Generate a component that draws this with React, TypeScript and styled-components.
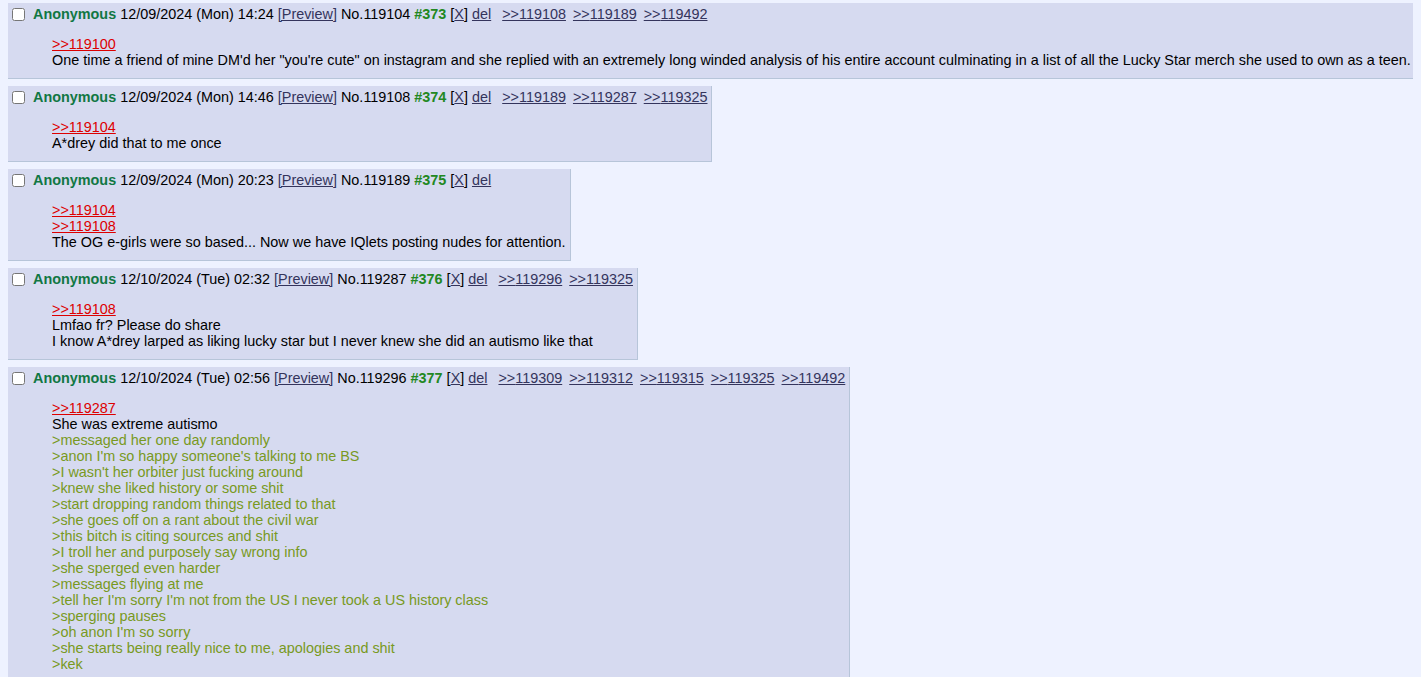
import React from "react";
import styled, { createGlobalStyle } from "styled-components";

const GlobalStyle = createGlobalStyle`
    html, body {
        background: #eef2ff;
    }
    body {
        margin: 3px 8px 0 8px;
        font-family: "Liberation Sans", Arial, sans-serif;
        font-size: 14.4px;
        color: #000;
    }
    ::-webkit-scrollbar {
        display: none;
    }
`;

const Thread = styled.div`
    display: flex;
    flex-direction: column;
    align-items: flex-start;
    gap: 7px;
`;

const Reply = styled.div`
    display: table;
    padding: 3px 4px 2px 2px;
    background: #d6daf0;
    border-right: 1px solid #b7c5d9;
    border-bottom: 1px solid #b7c5d9;
`;

const PostInfo = styled.div`
    display: flex;
    align-items: center;
    height: 16px;
    line-height: 16px;
    white-space: nowrap;
`;

const Check = styled.input`
    width: 13px;
    height: 13px;
    margin: 0 8px 0 2px;
`;

const Name = styled.span`
    color: #117743;
    font-weight: bold;
`;

const PostNum = styled.span`
    color: #228822;
    font-weight: bold;
`;

const InfoLink = styled.a`
    color: #34345c;
    text-decoration: underline;
    cursor: pointer;
`;

const BackLink = styled(InfoLink)`
    margin-left: 7px;
`;

const Body = styled.blockquote`
    margin: 14px 0 8px 42px;
    line-height: 16px;
    white-space: nowrap;
`;

const Line = styled.div<{ $kind?: "quote" | "green" }>`
    color: ${(p) => (p.$kind === "quote" ? "#dd0000" : p.$kind === "green" ? "#789922" : "#000")};
    text-decoration: ${(p) => (p.$kind === "quote" ? "underline" : "none")};
`;

type Post = {
    date: string;
    no: number;
    idx: number;
    backlinks: number[];
    lines: string[];
};

const posts: Post[] = [
    {
        date: "12/09/2024 (Mon) 14:24",
        no: 119104,
        idx: 373,
        backlinks: [119108, 119189, 119492],
        lines: [
            ">>119100",
            "One time a friend of mine DM'd her \"you're cute\" on instagram and she replied with an extremely long winded analysis of his entire account culminating in a list of all the Lucky Star merch she used to own as a teen.",
        ],
    },
    {
        date: "12/09/2024 (Mon) 14:46",
        no: 119108,
        idx: 374,
        backlinks: [119189, 119287, 119325],
        lines: [">>119104", "A*drey did that to me once"],
    },
    {
        date: "12/09/2024 (Mon) 20:23",
        no: 119189,
        idx: 375,
        backlinks: [],
        lines: [
            ">>119104",
            ">>119108",
            "The OG e-girls were so based... Now we have IQlets posting nudes for attention.",
        ],
    },
    {
        date: "12/10/2024 (Tue) 02:32",
        no: 119287,
        idx: 376,
        backlinks: [119296, 119325],
        lines: [
            ">>119108",
            "Lmfao fr? Please do share",
            "I know A*drey larped as liking lucky star but I never knew she did an autismo like that",
        ],
    },
    {
        date: "12/10/2024 (Tue) 02:56",
        no: 119296,
        idx: 377,
        backlinks: [119309, 119312, 119315, 119325, 119492],
        lines: [
            ">>119287",
            "She was extreme autismo",
            ">messaged her one day randomly",
            ">anon I'm so happy someone's talking to me BS",
            ">I wasn't her orbiter just fucking around",
            ">knew she liked history or some shit",
            ">start dropping random things related to that",
            ">she goes off on a rant about the civil war",
            ">this bitch is citing sources and shit",
            ">I troll her and purposely say wrong info",
            ">she sperged even harder",
            ">messages flying at me",
            ">tell her I'm sorry I'm not from the US I never took a US history class",
            ">sperging pauses",
            ">oh anon I'm so sorry",
            ">she starts being really nice to me, apologies and shit",
            ">kek",
        ],
    },
];

const lineKind = (text: string) => {
    if (/^>>\d+$/.test(text)) return "quote";
    if (text.startsWith(">")) return "green";
    return undefined;
};

const PostView = ({ post }: { post: Post }) => (
    <Reply>
        <PostInfo>
            <Check type="checkbox" />
            <span>
                <Name>Anonymous</Name> {post.date} <InfoLink>[Preview]</InfoLink> No.{post.no}{" "}
                <PostNum>#{post.idx}</PostNum> [<InfoLink>X</InfoLink>] <InfoLink>del</InfoLink>
                {post.backlinks.length > 0 && " "}
                {post.backlinks.map((b) => (
                    <BackLink key={b}>&gt;&gt;{b}</BackLink>
                ))}
            </span>
        </PostInfo>
        <Body>
            {post.lines.map((l, i) => (
                <Line key={i} $kind={lineKind(l)}>
                    {l}
                </Line>
            ))}
        </Body>
    </Reply>
);

export default function App() {
    return (
        <>
            <GlobalStyle />
            <Thread>
                {posts.map((p) => (
                    <PostView key={p.no} post={p} />
                ))}
            </Thread>
        </>
    );
}
